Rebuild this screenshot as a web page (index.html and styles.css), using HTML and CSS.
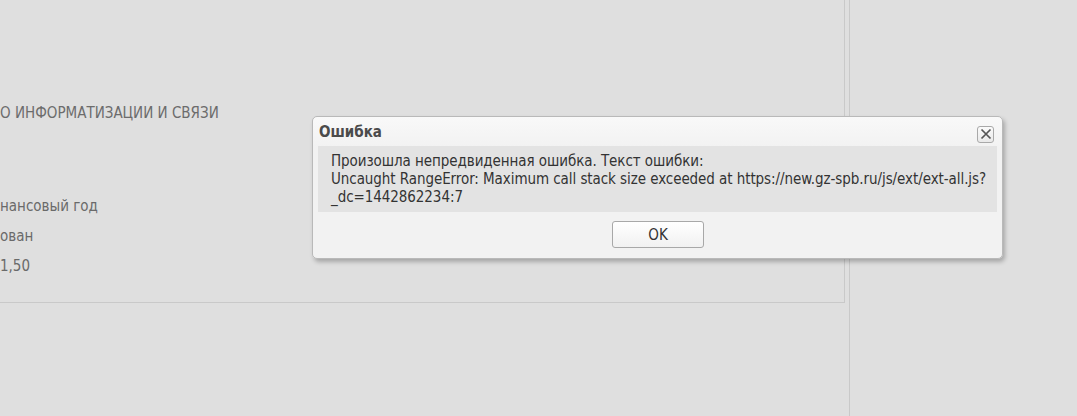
FILE: index.html
```html
<!DOCTYPE html>
<html lang="ru">
<head>
<meta charset="utf-8">
<title>Ошибка</title>
<link rel="stylesheet" href="styles.css">
</head>
<body>
<div class="page">
  <div class="panel">
    <div class="org">О ИНФОРМАТИЗАЦИИ И СВЯЗИ</div>
    <div class="rows">
      <div class="row">нансовый год</div>
      <div class="row">ован</div>
      <div class="row">1,50</div>
    </div>
  </div>
  <div class="side"></div>
</div>

<div class="dialog">
  <div class="dlg-head">
    <span class="dlg-title">Ошибка</span>
    <span class="dlg-close">
      <svg width="12" height="12" viewBox="0 0 12 12"><path d="M1.5 1.5 L10.5 10.5 M10.5 1.5 L1.5 10.5" stroke="#555" stroke-width="1.7" fill="none"/></svg>
    </span>
  </div>
  <div class="dlg-body">
    <div class="line">Произошла непредвиденная ошибка. Текст ошибки:</div>
    <div class="line">Uncaught RangeError: Maximum call stack size exceeded at https://new.gz-spb.ru/js/ext/ext-all.js?</div>
    <div class="line">_dc=1442862234:7</div>
  </div>
  <div class="dlg-foot">
    <button class="btn">OK</button>
  </div>
</div>
</body>
</html>
```

FILE: styles.css
```css
html, body {
  margin: 0;
  padding: 0;
  height: 100%;
}
body {
  background: #dfdfdf;
  font-family: "DejaVu Sans Condensed", "DejaVu Sans", sans-serif;
  font-size: 15px;
  color: #444;
  overflow: hidden;
}
.page {
  display: flex;
  gap: 4px;
  height: 416px;
}
.panel {
  width: 845px;
  height: 303px;
  border-right: 1px solid #c9c9c9;
  border-bottom: 1px solid #c9c9c9;
  flex: none;
  padding-top: 104px;
  box-sizing: border-box;
}
.org {
  color: #6c6c6c;
  line-height: 18px;
}
.rows {
  margin-top: 75px;
  display: flex;
  flex-direction: column;
  gap: 12px;
}
.row {
  color: #6a6a6a;
  line-height: 18px;
}
.side {
  flex: 1;
  border-left: 1px solid #c9c9c9;
}

.dialog {
  position: absolute;
  left: 312px;
  top: 116px;
  width: 691px;
  height: 143px;
  box-sizing: border-box;
  border: 1px solid #b9b9b9;
  border-radius: 5px;
  background: linear-gradient(#f9f9f9, #f2f2f2 30px);
  box-shadow: 2px 3px 4px rgba(0,0,0,0.25);
  padding: 0 5px;
}
.dlg-head {
  height: 29px;
  display: flex;
  align-items: center;
  justify-content: space-between;
  padding-left: 1px;
}
.dlg-title {
  font-weight: bold;
  color: #4b4b4b;
}
.dlg-close {
  width: 15px;
  height: 15px;
  border: 1px solid #a9a9a9;
  border-radius: 3px;
  background: linear-gradient(#fbfbfb, #e9e9e9);
  display: flex;
  align-items: center;
  justify-content: center;
  margin-right: 3px;
  margin-top: 5px;
}
.dlg-body {
  background: #e3e3e3;
  padding: 6px 13px;
  line-height: 18px;
  color: #333;
  letter-spacing: -0.07px;
}
.line {
  white-space: nowrap;
}
.dlg-foot {
  display: flex;
  justify-content: center;
  padding-top: 9px;
}
.btn {
  width: 92px;
  height: 27px;
  border: 1px solid #a8a8a8;
  border-radius: 3px;
  background: linear-gradient(#ffffff, #f1f1f1);
  font-family: inherit;
  font-size: 15px;
  color: #333;
  padding: 0;
  margin-left: 1px;
}
```
